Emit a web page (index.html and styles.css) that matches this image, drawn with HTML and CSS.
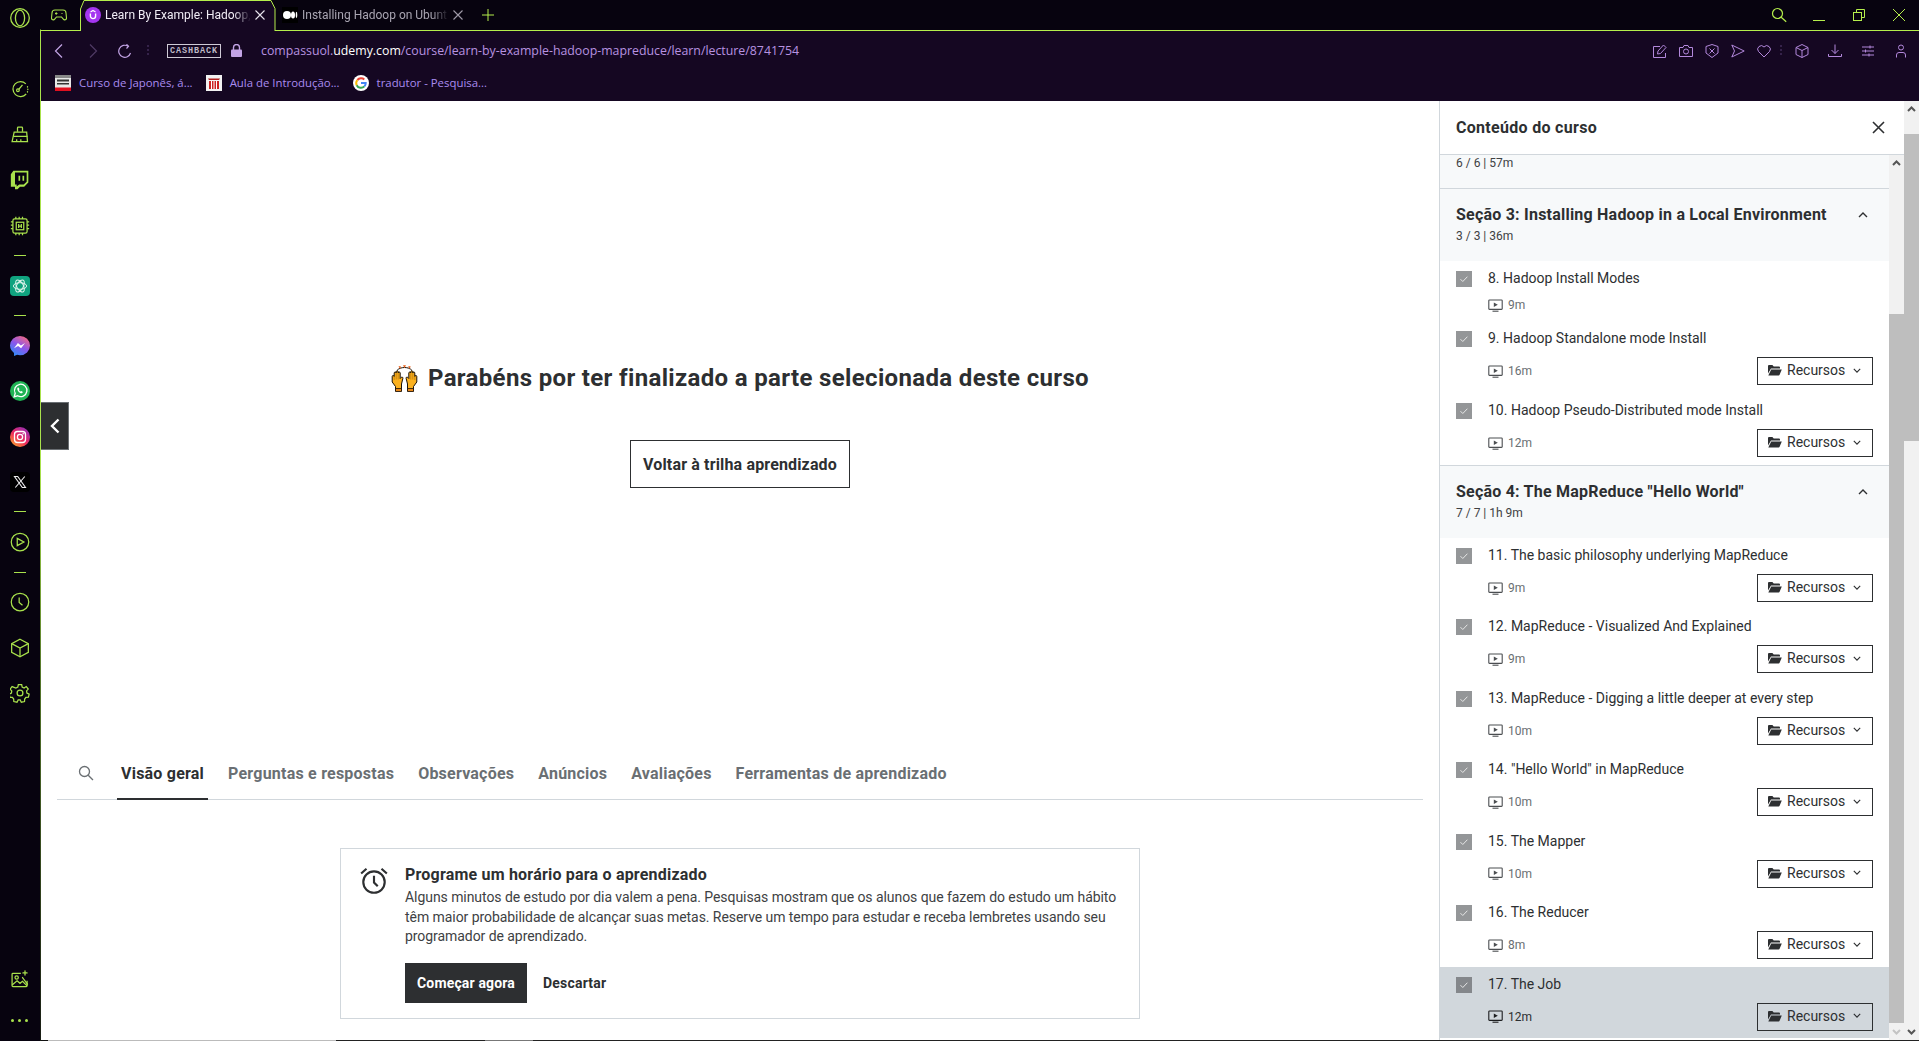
FILE: index.html
```html
<!DOCTYPE html>
<html lang="pt-BR">
<head>
  <meta charset="UTF-8" />
  <title>Learn By Example: Hadoop, MapReduce</title>
  <link rel="stylesheet" href="styles.css">
</head>
<body>
  <svg class="defs" width="0" height="0">
    <symbol id="i-play" viewBox="0 0 15 13"><path d="M1.5 1h12a.7.7 0 0 1 .7.7v8a.7.7 0 0 1-.7.7h-12a.7.7 0 0 1-.7-.7v-8a.7.7 0 0 1 .7-.7z" fill="none" stroke="currentColor" stroke-width="1.1"/><path d="M5.8 3.4l4 2.3-4 2.3z" fill="currentColor"/><path d="M4.5 12.2h6" stroke="currentColor" stroke-width="1.1"/></symbol>
    <symbol id="i-folder" viewBox="0 0 14 12"><path d="M0 2a1 1 0 0 1 1-1h3.4l1.3 1.4H11a1 1 0 0 1 1 1v1H3L0 9.5z" fill="currentColor"/><path d="M.3 11.4l2.9-6h10.6l-2.2 5.4a1 1 0 0 1-.9.6z" fill="currentColor"/></symbol>
    <symbol id="i-chev" viewBox="0 0 10 6"><path d="M1 1l4 4 4-4" fill="none" stroke="currentColor" stroke-width="1.4"/></symbol>
    <symbol id="i-chev-up" viewBox="0 0 10 6"><path d="M1 5l4-4 4 4" fill="none" stroke="currentColor" stroke-width="1.4"/></symbol>
    <symbol id="i-check" viewBox="0 0 16 16"><path d="M4.5 8.2l2.3 2.3 4.6-4.8" fill="none" stroke="currentColor" stroke-width="1"/></symbol>
    <symbol id="i-hand" viewBox="0 0 13 24"><path d="M1.200 8.500a1 1 0 0 1 2 0V5a1 1 0 0 1 2 0V3.800a1 1 0 0 1 2 0V5a1 1 0 0 1 2 0v5.500l1-1a1 1 0 0 1 1.600 1.200L10.500 16v7h-6v-4.500L1.200 14z" fill="#fbb11f" stroke="#1b1208" stroke-width="1"/><path d="M3.200 8.500v3.500M5.200 5v6.500M7.200 5v6.500" stroke="#b5760c" stroke-width=".7"/><path d="M4.500 20.500h6V23.500h-6z" fill="#e8881a" stroke="#1b1208" stroke-width=".8"/></symbol>
  </svg>

  <div class="app">
    <aside class="sidebar">
      <svg class="opera" width="24" height="24" viewBox="0 0 24 24" fill="none" stroke="#a9e24c" stroke-width="1.3"><circle cx="12" cy="12" r="9.3"/><ellipse cx="12" cy="12" rx="4.6" ry="7.8"/></svg>

      <svg class="side-icon" viewBox="0 0 24 24" fill="none" stroke="#a9e24c"><path d="M19 5.800A9 9 0 1 0 19.400 18"/><circle cx="9.500" cy="13.500" r="1.600"/><path d="M10.600 12.300L15 7"/><path d="M21 9v.6M21.400 12v.6M21 15v.6" stroke-linecap="round"/></svg>
      <svg class="side-icon" viewBox="0 0 24 24" fill="none" stroke="#a9e24c"><path d="M9 8V3.500a1 1 0 0 1 1-1h4a1 1 0 0 1 1 1V8"/><path d="M5 8.500h15l1 11.500H2.500z"/><path d="M4 13.500h17M8 20v-3M13 20v-3"/></svg>
      <svg class="side-icon" viewBox="0 0 24 24"><path fill="#a9e24c" d="M4 1h18v14l-5 5h-5l-3 3H6v-3H1V5z"/><path fill="#07030f" d="M6 3h14v11l-3.500 3.300H11l-3 2.500v-2.500H6z"/><path fill="#a9e24c" d="M10.200 7h2v6h-2zM15 7h2v6h-2z"/></svg>
      <svg class="side-icon" viewBox="0 0 24 24" fill="none" stroke="#a9e24c"><rect x="3.500" y="3.500" width="17" height="17" rx="2"/><rect x="7.500" y="7.500" width="9" height="9"/><path d="M10.400 9.500v5M13.600 9.500v5M10.400 12h3.200M1 7h2.500M1 11h2.500M1 15h2.500M20.500 7H23M20.500 11H23M20.500 15H23M7 1v2.500M11 1v2.500M15 1v2.500M7 20.500V23M11 20.500V23M15 20.500V23"/></svg>

      <span class="side-line"></span>

      <svg class="side-brand" viewBox="0 0 20 20"><rect width="20" height="20" rx="4" fill="#10a37f"/><g fill="none" stroke="#dff3ec" stroke-width="1"><ellipse cx="10" cy="10" rx="6.600" ry="3.300"/><ellipse cx="10" cy="10" rx="6.600" ry="3.300" transform="rotate(60 10 10)"/><ellipse cx="10" cy="10" rx="6.600" ry="3.300" transform="rotate(120 10 10)"/></g></svg>

      <span class="side-line"></span>

      <svg class="side-brand" viewBox="0 0 20 20"><defs><linearGradient id="g-msg" x1="0.2" y1="1" x2="0.8" y2="0"><stop offset="0" stop-color="#2a8ff7"/><stop offset=".5" stop-color="#8b55ec"/><stop offset="1" stop-color="#f76a7f"/></linearGradient></defs><path d="M10 0a10 9.600 0 0 1 0 19.200c-1 0-2-.1-2.900-.4L4 20v-3.100A9.500 9.500 0 0 1 0 9.600 10 9.600 0 0 1 10 0z" fill="url(#g-msg)"/><path d="M4 12.300l3.900-5.200 3 2.300 4.100-2.300-3.900 5.200-3-2.300z" fill="#fff"/></svg>
      <svg class="side-brand" viewBox="0 0 20 20"><circle cx="10" cy="10" r="10" fill="#20b455"/><path d="M4.200 15.800l1-3.500A6.200 6.200 0 1 1 7.600 14.800z" fill="none" stroke="#fff" stroke-width="1.300"/><path d="M7.800 6.600c-.9.900-.7 2.300.6 3.800 1.300 1.500 2.800 2.200 3.800 1.500l.7-.9-1.600-1-.7.600c-.8-.3-1.400-.9-1.700-1.700l.6-.7-.9-1.700z" fill="#fff"/></svg>
      <svg class="side-brand" viewBox="0 0 20 20"><defs><linearGradient id="g-ig" x1="0.1" y1="1" x2="0.9" y2="0"><stop offset="0" stop-color="#fdb02a"/><stop offset=".45" stop-color="#ee2a5b"/><stop offset="1" stop-color="#8a2fc4"/></linearGradient></defs><circle cx="10" cy="10" r="10" fill="url(#g-ig)"/><rect x="4.500" y="4.500" width="11" height="11" rx="3" fill="none" stroke="#fff" stroke-width="1.300"/><circle cx="10" cy="10" r="2.600" fill="none" stroke="#fff" stroke-width="1.300"/><circle cx="13.200" cy="6.800" r=".8" fill="#fff"/></svg>
      <svg class="side-brand" viewBox="0 0 20 20"><rect width="20" height="20" rx="4" fill="#000"/><path d="M4.500 4.500h3.200l7.800 11h-3.200zM14.800 4.500l-9.500 11" fill="none" stroke="#eee" stroke-width="1.100"/></svg>

      <span class="side-line"></span>

      <svg class="side-icon" viewBox="0 0 24 24" fill="none" stroke="#a9e24c"><circle cx="12" cy="12" r="10.500"/><path d="M8.700 7.600l8 4.400-8 4.400z"/></svg>

      <span class="side-line side-line-low"></span>

      <svg class="side-icon" viewBox="0 0 24 24" fill="none" stroke="#a9e24c"><circle cx="12" cy="12" r="10.500"/><path d="M11 6.500v6l4 3.500"/></svg>
      <svg class="side-icon" viewBox="0 0 24 24" fill="none" stroke="#a9e24c"><path d="M12 1.500l10 5.300v10.400l-10 5.300-10-5.300V6.800z"/><path d="M2 6.800L12 12l10-5.200M12 12v10.500"/></svg>
      <svg class="side-icon" viewBox="0 0 24 24" fill="none" stroke="#a9e24c"><circle cx="12" cy="12" r="3.500"/><path d="M10 2h4l.6 3 2.300 1 2.600-1.700 2.400 3-2 2.200.4 2.500 2.700 1.400-.9 3.700-3 .1-1.500 2-.2 3-3.800.8-1.400-2.700h-2.400l-1.400 2.700-3.800-.8-.2-3-1.500-2-3-.1-.9-3.700 2.700-1.400.4-2.500-2-2.200 2.400-3L7.100 6l2.300-1z"/></svg>

      <div class="side-bottom">
        <svg class="side-icon" viewBox="0 0 24 24" fill="none" stroke="#a9e24c"><path d="M13 4H3.500a1 1 0 0 0-1 1v14a1 1 0 0 0 1 1h16a1 1 0 0 0 1-1v-6"/><circle cx="8" cy="9" r="2"/><path d="M2.500 18l6-5 3.500 3 3-2.500 5.500 5.500"/><path d="M18 1v5M15.500 3.500h5M15 9l6 8" stroke-linecap="round" stroke-dasharray="2 1"/></svg>
        <div class="side-dots"><i></i><i></i><i></i></div>
      </div>
    </aside>

    <div class="window">
      <header class="tabstrip">
        <svg class="strip-game" width="16" height="12" viewBox="0 0 16 12" fill="none" stroke="#a9e24c" stroke-width="1.100"><path d="M4 1h8a3 3 0 0 1 3 3l.5 5a1.800 1.800 0 0 1-3.200 1.200L10.500 8h-5l-1.800 2.200A1.800 1.800 0 0 1 .5 9L1 4a3 3 0 0 1 3-3z"/><path d="M4 4.500h2.500M5.200 3.200v2.600M10.500 4.500h1"/></svg>

        <div class="tab tab-active">
          <svg class="tab-shape" width="196" height="31" viewBox="0 0 196 31"><path d="M.5 31V9L4 .5h187l4 8V31" fill="#150722" stroke="#b5ee4c"/></svg>
          <svg class="favicon" width="16" height="16" viewBox="0 0 16 16"><circle cx="8" cy="8" r="8" fill="#a435f0"/><path d="M5.400 6.500V9a2.600 2.600 0 0 0 5.200 0V6.500" fill="none" stroke="#fff" stroke-width="1.400"/><path d="M5.500 5L8 3.500 10.500 5" fill="none" stroke="#fff" stroke-width="1.200"/></svg>
          <span class="tab-title tab-title-on">Learn By Example: Hadoop,</span>
          <svg class="tab-close" width="10" height="10" viewBox="0 0 10 10"><path d="M.5.500l9 9M9.500.500l-9 9" stroke="#e8e4ee" stroke-width="1.100"/></svg>
        </div>

        <div class="tab tab-back">
          <svg class="favicon" width="16" height="16" viewBox="0 0 16 16"><rect width="16" height="16" fill="#000"/><ellipse cx="5" cy="8" rx="4" ry="3.900" fill="#fff"/><ellipse cx="11" cy="8" rx="2" ry="3.600" fill="#fff"/><ellipse cx="14.500" cy="8" rx=".8" ry="3.200" fill="#fff"/></svg>
          <span class="tab-title">Installing Hadoop on Ubunt</span>
          <svg class="tab-close" width="10" height="10" viewBox="0 0 10 10"><path d="M.5.500l9 9M9.500.500l-9 9" stroke="#9f9aa8" stroke-width="1.100"/></svg>
        </div>

        <svg class="tab-plus" width="12" height="12" viewBox="0 0 12 12"><path d="M6 0v12M0 6h12" stroke="#b5ee4c"/></svg>

        <div class="win-controls">
          <span class="win-slot"><svg width="16" height="16" viewBox="0 0 16 16" fill="none" stroke="#b5ee4c" stroke-width="1.200"><circle cx="6.500" cy="6.500" r="5"/><path d="M10.200 10.200l5 4.500"/></svg></span>
          <span class="win-slot"><svg width="12" height="12" viewBox="0 0 12 12"><path d="M0 11.500h12" stroke="#b5ee4c"/></svg></span>
          <span class="win-slot"><svg width="12" height="12" viewBox="0 0 12 12" fill="none" stroke="#b5ee4c"><path d="M3.500 3V.5h8v8H9"/><rect x=".5" y="3.500" width="8" height="8"/></svg></span>
          <span class="win-slot"><svg width="12" height="12" viewBox="0 0 12 12"><path d="M0 0l12 12M12 0L0 12" stroke="#b5ee4c"/></svg></span>
        </div>
      </header>

      <div class="toolbar">
        <div class="nav-row">
          <svg class="nav-back" width="9" height="14" viewBox="0 0 9 14" fill="none" stroke="#c3a4e6" stroke-width="1.200"><path d="M8 .5L1.500 7 8 13.500"/></svg>
          <svg class="nav-fwd" width="9" height="14" viewBox="0 0 9 14" fill="none" stroke="#4f3a64" stroke-width="1.200"><path d="M1 .5L7.500 7 1 13.500"/></svg>
          <svg class="nav-reload" width="14" height="14" viewBox="0 0 14 14" fill="none" stroke="#c3a4e6" stroke-width="1.200"><path d="M12.500 9A6 6 0 1 1 10 2.200"/><path d="M8.500 .3L10.500 2.300 8.500 4.500" /></svg>
          <span class="nav-sep"></span>
          <span class="cashback">CASHBACK</span>
          <svg class="lock" width="11" height="13" viewBox="0 0 11 13"><path d="M2.500 6V3.500a3 3 0 0 1 6 0V6" fill="none" stroke="#c3a4e6" stroke-width="1.400"/><rect y="5.500" width="11" height="7.500" rx="1" fill="#c3a4e6"/></svg>
          <span class="url">compassuol.<b>udemy.com</b>/course/learn-by-example-hadoop-mapreduce/learn/lecture/8741754</span>
          <div class="tool-icons">
            <svg width="14" height="14" viewBox="0 0 14 14" fill="none" stroke="#b388dc"><path d="M7 2.500H.5v11h12V9"/><path d="M4.500 10l.5-3 5.500-6 2.500 2.500-5.500 6z"/></svg>
            <svg width="14" height="14" viewBox="0 0 14 14" fill="none" stroke="#b388dc"><path d="M.5 3.500h3.500l1-2h4l1 2h3.500v9H.5z"/><circle cx="7" cy="7.500" r="2.500"/></svg>
            <svg width="14" height="14" viewBox="0 0 14 14" fill="none" stroke="#b388dc"><path d="M7 .5l6 2v6.500L7 13.500 1 9V2.500z"/><path d="M4.500 4.500l5 5M9.500 4.500l-5 5"/></svg>
            <svg width="14" height="14" viewBox="0 0 14 14" fill="none" stroke="#b388dc"><path d="M.8 1l12.400 6L.8 13l2.700-6z"/></svg>
            <svg width="14" height="14" viewBox="0 0 14 14" fill="none" stroke="#b388dc"><path d="M7 13L1.500 7.500A3.500 3.500 0 0 1 7 3a3.500 3.500 0 0 1 5.500 4.500z"/></svg>
            <span class="nav-sep tool-sep"></span>
            <svg class="tool-cube" width="14" height="14" viewBox="0 0 14 14" fill="none" stroke="#b388dc"><path d="M7 .5l6 3v7l-6 3-6-3v-7zM1 3.500l6 3 6-3M7 6.500v7"/></svg>
            <svg class="tool-wide" width="14" height="14" viewBox="0 0 14 14" fill="none" stroke="#b388dc"><path d="M7 .5v9M3.500 6L7 9.500 10.500 6M.5 10v2.500h13V10"/></svg>
            <svg class="tool-wide" width="14" height="14" viewBox="0 0 14 14" fill="none" stroke="#b388dc"><path d="M1 3h12M1 7h12M1 11h12"/><path d="M9 1.500v3M4.500 5.500v3M8 9.500v3"/></svg>
            <svg class="tool-wide" width="14" height="14" viewBox="0 0 14 14" fill="none" stroke="#b388dc"><circle cx="7" cy="3.500" r="2.500"/><path d="M2.500 13.500V11a2.500 2.500 0 0 1 2.500-2.500h4a2.500 2.500 0 0 1 2.500 2.500v2.500"/></svg>
          </div>
        </div>
        <div class="bookmarks">
          <a class="bm">
            <svg width="16" height="16" viewBox="0 0 16 16"><rect width="16" height="16" fill="#e8e8e8"/><rect width="16" height="3" fill="#888"/><path d="M2 4.500h12v2H2zM2 8h12v1.500H2z" fill="#333"/><rect y="12.500" width="16" height="3.500" fill="#e01020"/></svg>
            <span>Curso de Japonês, á...</span>
          </a>
          <a class="bm">
            <svg width="16" height="16" viewBox="0 0 16 16"><rect width="16" height="16" fill="#f2f2f2"/><path d="M2 3.500h12L13 5H3z" fill="#b01d1d"/><path d="M3 6h10v8H3z" fill="#c22"/><path d="M5.500 6v8M8 6v8M10.500 6v8" stroke="#fff"/></svg>
            <span>Aula de Introdução...</span>
          </a>
          <a class="bm">
            <svg width="16" height="16" viewBox="0 0 16 16"><circle cx="8" cy="8" r="8" fill="#fff"/><path d="M4.400 5A4.800 4.800 0 0 1 11.300 4.500" fill="none" stroke="#ea4335" stroke-width="2"/><path d="M3.700 10.200a4.800 4.800 0 0 1 .6-5.100" fill="none" stroke="#fbbc05" stroke-width="2"/><path d="M11.400 11.400A4.800 4.800 0 0 1 3.700 10.200" fill="none" stroke="#34a853" stroke-width="2"/><path d="M8 8h4.700a4.800 4.800 0 0 1-1.300 3.400" fill="none" stroke="#4285f4" stroke-width="2"/></svg>
            <span>tradutor - Pesquisa...</span>
          </a>
        </div>
      </div>

      <div class="page">
        <main class="course">
          <button class="expand">
            <svg width="10" height="16" viewBox="0 0 10 16" fill="none" stroke="#fff" stroke-width="2.400"><path d="M8.500 1.500L2 8l6.500 6.500"/></svg>
          </button>
          <section class="hero">
            <h1 class="hero-title">
              <span class="hands">
                <svg width="13" height="24"><use href="#i-hand"/></svg>
                <svg class="hand-flip" width="13" height="24"><use href="#i-hand"/></svg>
                <svg class="sparks" width="17" height="6" viewBox="0 0 17 6"><path d="M1 5.500C4 1.500 13 1.500 16 5.500" fill="none" stroke="#1b1208" stroke-width="1"/><path d="M2.500 1l2.500.5-1 2.500zM7 .2h3L8.500 3zM12 1.500l2.500-.5-.500 3z" fill="#e8601a"/></svg>
              </span>
              Parabéns por ter finalizado a parte selecionada deste curso
            </h1>
            <button class="hero-btn">Voltar à trilha aprendizado</button>
          </section>

          <nav class="course-tabs">
            <svg class="tabs-search" width="16" height="16" viewBox="0 0 16 16" fill="none" stroke="#6a6f73" stroke-width="1.300"><circle cx="6.500" cy="6.500" r="5"/><path d="M10.200 10.200L15 15"/></svg>
            <a class="course-tab course-tab-on">Visão geral</a>
            <a class="course-tab">Perguntas e respostas</a>
            <a class="course-tab">Observações</a>
            <a class="course-tab">Anúncios</a>
            <a class="course-tab">Avaliações</a>
            <a class="course-tab">Ferramentas de aprendizado</a>
          </nav>

          <section class="reminder">
            <svg class="reminder-icon" width="30" height="30" viewBox="0 0 28 28" fill="none" stroke="#2d2f31" stroke-width="2"><circle cx="14" cy="15" r="10"/><path d="M14 9v6.500l3.500 3.500"/><path d="M2 7l5-4.500M26 7l-5-4.500" /></svg>
            <div class="reminder-body">
              <h2 class="reminder-title">Programe um horário para o aprendizado</h2>
              <p class="reminder-text">Alguns minutos de estudo por dia valem a pena. Pesquisas mostram que os alunos que fazem do estudo um hábito têm maior probabilidade de alcançar suas metas. Reserve um tempo para estudar e receba lembretes usando seu programador de aprendizado.</p>
              <div class="reminder-actions">
                <button class="btn-dark">Começar agora</button>
                <button class="btn-plain">Descartar</button>
              </div>
            </div>
          </section>
        </main>

        <aside class="panel">
          <div class="panel-head">
            <span>Conteúdo do curso</span>
            <svg width="13" height="13" viewBox="0 0 13 13"><path d="M1 1l11 11M12 1L1 12" stroke="#2d2f31" stroke-width="1.600"/></svg>
          </div>
          <div class="panel-scroll">
            <div class="curriculum">
              <div class="section-tail">6 / 6 | 57m</div>

              <div class="section-head">
                <div>
                  <div class="section-title">Seção 3: Installing Hadoop in a Local Environment</div>
                  <div class="section-sub">3 / 3 | 36m</div>
                </div>
                <svg class="section-chev" width="10" height="6"><use href="#i-chev-up"/></svg>
              </div>
              <ul class="items items-three">
                <li class="item item-short">
                  <span class="check"><svg width="16" height="16"><use href="#i-check"/></svg></span>
                  <div class="item-body">
                    <div class="item-title">8. Hadoop Install Modes</div>
                    <div class="item-meta"><span class="dur"><svg width="15" height="13"><use href="#i-play"/></svg>9m</span></div>
                  </div>
                </li>
                <li class="item item-wide">
                  <span class="check"><svg width="16" height="16"><use href="#i-check"/></svg></span>
                  <div class="item-body">
                    <div class="item-title">9. Hadoop Standalone mode Install</div>
                    <div class="item-meta"><span class="dur"><svg width="15" height="13"><use href="#i-play"/></svg>16m</span><button class="res"><svg width="14" height="12"><use href="#i-folder"/></svg>Recursos<svg class="res-chev" width="8" height="5"><use href="#i-chev"/></svg></button></div>
                  </div>
                </li>
                <li class="item item-wide">
                  <span class="check"><svg width="16" height="16"><use href="#i-check"/></svg></span>
                  <div class="item-body">
                    <div class="item-title">10. Hadoop Pseudo-Distributed mode Install</div>
                    <div class="item-meta"><span class="dur"><svg width="15" height="13"><use href="#i-play"/></svg>12m</span><button class="res"><svg width="14" height="12"><use href="#i-folder"/></svg>Recursos<svg class="res-chev" width="8" height="5"><use href="#i-chev"/></svg></button></div>
                  </div>
                </li>
              </ul>

              <div class="section-head">
                <div>
                  <div class="section-title">Seção 4: The MapReduce "Hello World"</div>
                  <div class="section-sub">7 / 7 | 1h 9m</div>
                </div>
                <svg class="section-chev" width="10" height="6"><use href="#i-chev-up"/></svg>
              </div>
              <ul class="items">
                <li class="item">
                  <span class="check"><svg width="16" height="16"><use href="#i-check"/></svg></span>
                  <div class="item-body">
                    <div class="item-title">11. The basic philosophy underlying MapReduce</div>
                    <div class="item-meta"><span class="dur"><svg width="15" height="13"><use href="#i-play"/></svg>9m</span><button class="res"><svg width="14" height="12"><use href="#i-folder"/></svg>Recursos<svg class="res-chev" width="8" height="5"><use href="#i-chev"/></svg></button></div>
                  </div>
                </li>
                <li class="item">
                  <span class="check"><svg width="16" height="16"><use href="#i-check"/></svg></span>
                  <div class="item-body">
                    <div class="item-title">12. MapReduce - Visualized And Explained</div>
                    <div class="item-meta"><span class="dur"><svg width="15" height="13"><use href="#i-play"/></svg>9m</span><button class="res"><svg width="14" height="12"><use href="#i-folder"/></svg>Recursos<svg class="res-chev" width="8" height="5"><use href="#i-chev"/></svg></button></div>
                  </div>
                </li>
                <li class="item">
                  <span class="check"><svg width="16" height="16"><use href="#i-check"/></svg></span>
                  <div class="item-body">
                    <div class="item-title">13. MapReduce - Digging a little deeper at every step</div>
                    <div class="item-meta"><span class="dur"><svg width="15" height="13"><use href="#i-play"/></svg>10m</span><button class="res"><svg width="14" height="12"><use href="#i-folder"/></svg>Recursos<svg class="res-chev" width="8" height="5"><use href="#i-chev"/></svg></button></div>
                  </div>
                </li>
                <li class="item">
                  <span class="check"><svg width="16" height="16"><use href="#i-check"/></svg></span>
                  <div class="item-body">
                    <div class="item-title">14. "Hello World" in MapReduce</div>
                    <div class="item-meta"><span class="dur"><svg width="15" height="13"><use href="#i-play"/></svg>10m</span><button class="res"><svg width="14" height="12"><use href="#i-folder"/></svg>Recursos<svg class="res-chev" width="8" height="5"><use href="#i-chev"/></svg></button></div>
                  </div>
                </li>
                <li class="item">
                  <span class="check"><svg width="16" height="16"><use href="#i-check"/></svg></span>
                  <div class="item-body">
                    <div class="item-title">15. The Mapper</div>
                    <div class="item-meta"><span class="dur"><svg width="15" height="13"><use href="#i-play"/></svg>10m</span><button class="res"><svg width="14" height="12"><use href="#i-folder"/></svg>Recursos<svg class="res-chev" width="8" height="5"><use href="#i-chev"/></svg></button></div>
                  </div>
                </li>
                <li class="item">
                  <span class="check"><svg width="16" height="16"><use href="#i-check"/></svg></span>
                  <div class="item-body">
                    <div class="item-title">16. The Reducer</div>
                    <div class="item-meta"><span class="dur"><svg width="15" height="13"><use href="#i-play"/></svg>8m</span><button class="res"><svg width="14" height="12"><use href="#i-folder"/></svg>Recursos<svg class="res-chev" width="8" height="5"><use href="#i-chev"/></svg></button></div>
                  </div>
                </li>
                <li class="item item-active">
                  <span class="check"><svg width="16" height="16"><use href="#i-check"/></svg></span>
                  <div class="item-body">
                    <div class="item-title">17. The Job</div>
                    <div class="item-meta"><span class="dur"><svg width="15" height="13"><use href="#i-play"/></svg>12m</span><button class="res"><svg width="14" height="12"><use href="#i-folder"/></svg>Recursos<svg class="res-chev" width="8" height="5"><use href="#i-chev"/></svg></button></div>
                  </div>
                </li>
              </ul>
            </div>
            <div class="scrollbar scrollbar-inner">
              <svg class="sb-arrow" width="15" height="17" viewBox="0 0 15 17"><path d="M4 10l3.500-3.500L11 10" fill="none" stroke="#555" stroke-width="2"/></svg>
              <div class="sb-thumb"></div>
              <svg class="sb-arrow" width="15" height="17" viewBox="0 0 15 17"><path d="M4 7l3.500 3.500L11 7" fill="none" stroke="#c4c4c4" stroke-width="2"/></svg>
            </div>
          </div>
        </aside>

        <div class="scrollbar scrollbar-page">
          <svg class="sb-arrow" width="15" height="17" viewBox="0 0 15 17"><path d="M4 10l3.500-3.500L11 10" fill="none" stroke="#555" stroke-width="2"/></svg>
          <div class="sb-thumb"></div>
          <div class="sb-rest"></div>
          <svg class="sb-arrow" width="15" height="17" viewBox="0 0 15 17"><path d="M4 7l3.500 3.500L11 7" fill="none" stroke="#555" stroke-width="2"/></svg>
        </div>
      </div>
      <div class="bottom-edge"></div>
    </div>
  </div>
</body>
</html>
```

FILE: styles.css
```css
* {
  box-sizing: border-box;
}
html, body {
  margin: 0;
  height: 100%;
  overflow: hidden;
}
body {
  font-family: Roboto, "Liberation Sans", sans-serif;
  color: #2d2f31;
  background: #fff;
}
button {
  font-family: inherit;
  cursor: pointer;
}
ul {
  list-style: none;
  margin: 0;
  padding: 0;
}
svg {
  display: block;
  flex: none;
}
.defs {
  position: absolute;
}
.app {
  display: flex;
  height: 1041px;
}

/* opera side strip */
.sidebar {
  width: 41px;
  flex: none;
  display: flex;
  flex-direction: column;
  align-items: center;
  background: #07030f;
  border-right: 1px solid;
  border-image: linear-gradient(#07030f 30px, #a9e24c 31px, #a9e24c 45%, #55762b 65%, #181c14) 1;
  padding-right: 1px;
}
.opera {
  margin-top: 6px;
  margin-bottom: 47px;
}
.side-icon {
  width: 20px;
  height: 24px;
  margin-bottom: 21.5px;
  stroke-width: 1.5;
}
.side-brand {
  width: 20px;
  height: 20px;
  margin-top: 2px;
  margin-bottom: 23.5px;
}
.side-line {
  width: 12px;
  height: 1px;
  background: #a9e24c;
  margin: -4.5px 0 18px;
}
.side-line-low {
  margin: -3.5px 0 17px;
}
.side-bottom {
  margin-top: auto;
  padding-bottom: 19px;
  display: flex;
  flex-direction: column;
  align-items: center;
}
.side-bottom .side-icon {
  margin-bottom: 27px;
}
.side-dots {
  display: flex;
  gap: 4px;
}
.side-dots i {
  width: 3px;
  height: 3px;
  border-radius: 50%;
  background: #a9e24c;
}

.window {
  flex: 1;
  min-width: 0;
  display: flex;
  flex-direction: column;
}

/* tabs */
.tabstrip {
  height: 31px;
  flex: none;
  display: flex;
  align-items: center;
  background: #07030f;
  border-bottom: 1px solid #b5ee4c;
  padding-left: 10px;
}
.strip-game {
  margin-right: 13px;
}
.tab {
  position: relative;
  width: 195px;
  height: 31px;
  display: flex;
  align-items: center;
  padding: 0 10px 1px 5px;
  gap: 4px;
}
.tab-back {
  width: 194px;
  padding: 0 6px 1px 7px;
}
.tab-shape {
  position: absolute;
  left: 0;
  top: 0;
}
.favicon, .tab-title, .tab-close {
  position: relative;
}
.tab-title {
  flex: 1;
  overflow: hidden;
  white-space: nowrap;
  font: 12px Roboto, sans-serif;
  color: #a9a5b2;
  -webkit-mask-image: linear-gradient(90deg, #000 88%, transparent);
  mask-image: linear-gradient(90deg, #000 88%, transparent);
}
.tab-title-on {
  color: #f1edf6;
}
.tab-plus {
  margin-left: 13px;
}
.win-controls {
  margin-left: auto;
  display: flex;
  align-items: center;
}
.win-slot {
  width: 40px;
  height: 30px;
  display: flex;
  align-items: center;
  justify-content: center;
}

/* address bar */
.toolbar {
  height: 70px;
  flex: none;
  background: #150722;
}
.nav-row {
  height: 39px;
  display: flex;
  align-items: center;
  padding: 0 11px 0 13px;
}
.nav-back {
  margin-right: 26px;
}
.nav-fwd {
  margin-right: 20px;
}
.nav-reload {
  margin-right: 15px;
}
.nav-sep {
  width: 2px;
  height: 11px;
  background: repeating-linear-gradient(#35224a 0 2px, transparent 2px 4px);
}
.cashback {
  margin-left: 18px;
  width: 54px;
  height: 14px;
  border: 1px solid #cfcad6;
  font: 700 8.5px/12px "Liberation Mono", monospace;
  letter-spacing: .9px;
  text-align: center;
  color: #bdb8c5;
}
.lock {
  margin-left: 10px;
}
.url {
  margin-left: 19px;
  font: 12.33px "Open Sans", sans-serif;
  color: #b792e0;
  white-space: nowrap;
}
.url b {
  font-weight: 400;
  color: #fff;
}
.tool-icons {
  margin-left: auto;
  display: flex;
  align-items: center;
  gap: 12px;
}
.tool-sep {
  margin-left: -3px;
}
.tool-cube {
  margin-left: 1px;
}
.tool-wide {
  margin-left: 7px;
}
.bookmarks {
  display: flex;
  align-items: center;
  height: 25px;
  padding-left: 14px;
}
.bm {
  display: flex;
  align-items: center;
  gap: 8px;
  margin-right: 13px;
  font: 11.4px "Open Sans", sans-serif;
  color: #a98cf0;
  white-space: nowrap;
}

/* page content */
.page {
  flex: 1;
  min-height: 0;
  display: flex;
  background: #fff;
}
.course {
  position: relative;
  flex: 1;
  min-width: 0;
}
.expand {
  position: absolute;
  left: 0;
  top: 301px;
  width: 28px;
  height: 48px;
  display: flex;
  align-items: center;
  justify-content: center;
  padding: 0;
  background: #2d2f31;
  border: 1px solid #6a6f73;
  border-left: 0;
}
.hero {
  display: flex;
  flex-direction: column;
  align-items: center;
  padding-top: 259px;
  height: 649px;
}
.hero-title {
  display: flex;
  align-items: center;
  gap: 10px;
  margin: 0 0 44px;
  font-size: 24px;
  line-height: 36px;
  font-weight: 700;
  letter-spacing: .34px;
  white-space: nowrap;
}
.hands {
  position: relative;
  width: 27px;
  height: 27px;
  padding-top: 3px;
  display: flex;
  justify-content: space-between;
}
.hand-flip {
  transform: scaleX(-1);
}
.sparks {
  position: absolute;
  left: 5px;
  top: 0;
}
.hero-btn {
  width: 220px;
  height: 48px;
  background: #fff;
  border: 1px solid #2d2f31;
  font-size: 16px;
  font-weight: 700;
  letter-spacing: .15px;
  color: #2d2f31;
  padding: 0;
}

.course-tabs {
  height: 50px;
  margin: 0 16px;
  display: flex;
  align-items: stretch;
  gap: 16px;
  padding-left: 21px;
  border-bottom: 1px solid #d1d7dc;
}
.tabs-search {
  align-self: center;
  margin-right: 7px;
  margin-bottom: 4px;
}
.course-tab {
  padding: 0 4px 1px;
  margin-bottom: -1px;
  display: flex;
  align-items: center;
  font-size: 16px;
  font-weight: 700;
  letter-spacing: .22px;
  color: #6a6f73;
  white-space: nowrap;
  border-bottom: 2px solid transparent;
}
.course-tab-on {
  color: #2d2f31;
  border-bottom-color: #2d2f31;
}

.reminder {
  width: 800px;
  height: 171px;
  margin: 48px auto 0;
  padding: 16px 12px 15px 18px;
  display: flex;
  gap: 16px;
  border: 1px solid #d1d7dc;
}
.reminder-icon {
  margin-top: 1px;
}
.reminder-title {
  margin: 0 0 3px;
  font-size: 16px;
  line-height: 20px;
  font-weight: 700;
  letter-spacing: .2px;
}
.reminder-text {
  margin: 0 0 16.5px;
  font-size: 14px;
  line-height: 19.5px;
  letter-spacing: -.06px;
  color: #3e4143;
}
.reminder-actions {
  display: flex;
  align-items: center;
  gap: 16px;
}
.btn-dark {
  width: 122px;
  height: 40px;
  padding: 0;
  border: 0;
  background: #2d2f31;
  color: #fff;
  font-size: 14px;
  font-weight: 700;
  letter-spacing: .15px;
}
.btn-plain {
  padding: 0;
  border: 0;
  background: none;
  color: #2d2f31;
  font-size: 14px;
  font-weight: 700;
  letter-spacing: .2px;
}

/* curriculum panel */
.panel {
  width: 465px;
  flex: none;
  display: flex;
  flex-direction: column;
  border-left: 1px solid #d1d7dc;
}
.panel-head {
  height: 54px;
  flex: none;
  display: flex;
  align-items: center;
  justify-content: space-between;
  padding: 0 19px 0 16px;
  border-bottom: 1px solid #d1d7dc;
  font-size: 16px;
  font-weight: 700;
  letter-spacing: .3px;
}
.panel-scroll {
  flex: 1;
  min-height: 0;
  display: flex;
}
.curriculum {
  flex: 1;
  min-width: 0;
  overflow: hidden;
}
.section-tail {
  height: 33px;
  padding: 0 16px;
  background: #f7f9fa;
  font-size: 12px;
  line-height: 17px;
  color: #3e4143;
}
.section-head {
  height: 73px;
  padding: 16px 21px 0 16px;
  display: flex;
  justify-content: space-between;
  background: #f7f9fa;
  border-top: 1px solid #d1d7dc;
}
.section-title {
  font-size: 16px;
  line-height: 20px;
  font-weight: 700;
  letter-spacing: .22px;
  white-space: nowrap;
}
.section-sub {
  margin-top: 3px;
  font-size: 12px;
  line-height: 16px;
  color: #3e4143;
}
.section-chev {
  margin-top: 7px;
  color: #2d2f31;
}
.items-three {
  height: 204px;
}
.item {
  height: 71.45px;
  padding: 8px 16px 0;
  display: flex;
  gap: 16px;
}
.item-wide {
  height: 72px;
}
.item-short {
  height: 60px;
}
.item-active {
  background: #d1d7dc;
}
.check {
  width: 16px;
  height: 16px;
  margin-top: 2px;
  flex: none;
  background: #949698;
  color: #e6e6e6;
}
.item-active .check {
  background: #84878b;
}
.item-body {
  flex: 1;
  min-width: 0;
}
.item-title {
  font-size: 14px;
  line-height: 18px;
  color: #2d2f31;
  white-space: nowrap;
}
.item-meta {
  margin-top: 10px;
  min-height: 16px;
  display: flex;
  align-items: center;
  justify-content: space-between;
}
.dur {
  display: flex;
  align-items: center;
  gap: 5px;
  font-size: 12px;
  line-height: 16px;
  color: #6a6f73;
}
.dur svg {
  color: #4b4e51;
}
.item-active .dur {
  color: #2d2f31;
}
.item-active .dur svg {
  color: #1c1d1f;
}
.res {
  width: 116px;
  height: 28px;
  padding: 0 0 2px 10px;
  display: flex;
  align-items: center;
  gap: 5px;
  background: transparent;
  border: 1px solid #2d2f31;
  font-size: 14px;
  color: #2d2f31;
}
.res-chev {
  margin-left: 3px;
}

/* fake scrollbars, the page does not really scroll */
.scrollbar {
  width: 15px;
  flex: none;
  display: flex;
  flex-direction: column;
  background: #f1f1f1;
}
.sb-thumb {
  background: #bebebe;
}
.scrollbar-inner .sb-thumb {
  margin-top: 142px;
  flex: 1;
}
.scrollbar-page .sb-thumb {
  margin-top: 16px;
  height: 307px;
}
.sb-rest {
  flex: 1;
}
.bottom-edge {
  height: 1px;
  flex: none;
  background: linear-gradient(90deg, #111 0 7px, #bbb 7px 295px, #222 295px 444px, #777 444px 492px, #222 492px);
}
```
